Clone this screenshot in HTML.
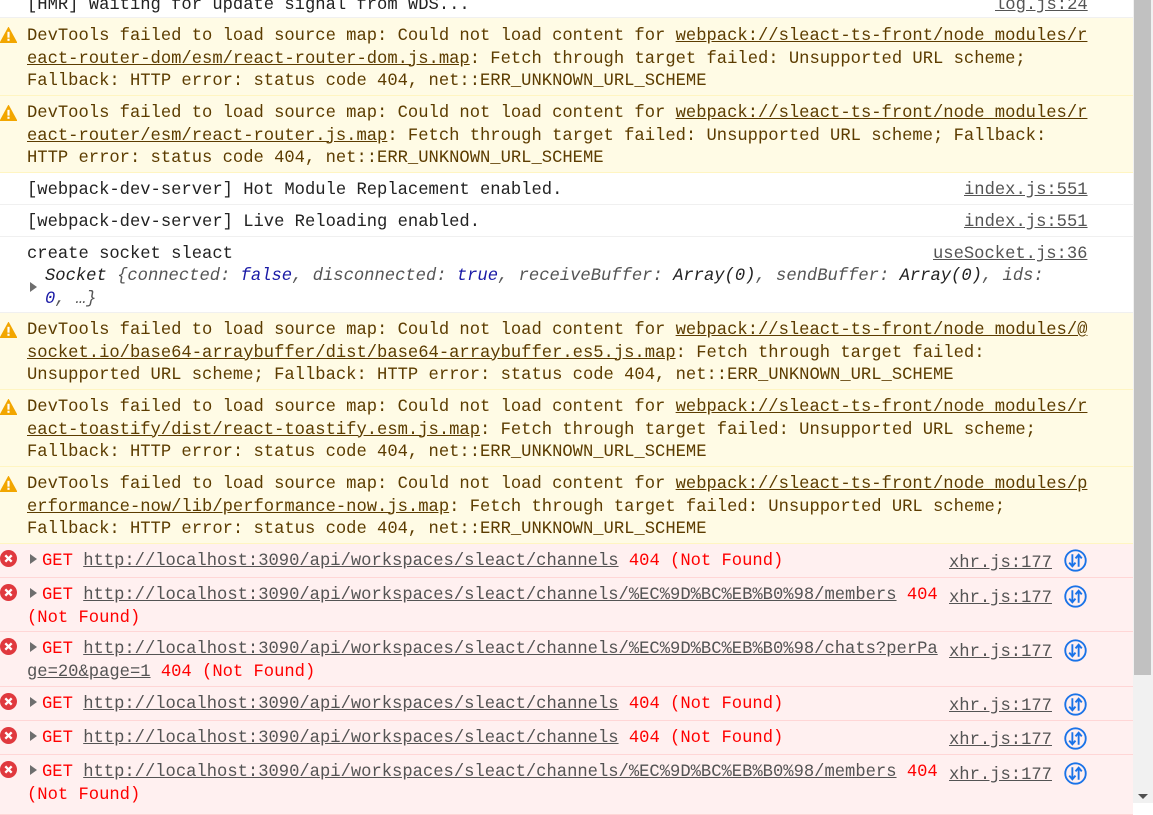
<!DOCTYPE html>
<html><head><meta charset="utf-8"><style>
*{margin:0;padding:0;box-sizing:border-box}
body{width:1153px;height:803px;overflow:hidden;background:#fff;font-family:"Liberation Mono",monospace;font-size:17.17px;position:relative}
.r{position:absolute;left:0;width:1133px;border-bottom:1px solid #f0f0f0}
.w{background:#fffbe5;border-bottom:1px solid #fff5c2;color:#5c3c00}
.e{background:#fff0f0;border-bottom:1px solid #ffd6d6;color:#f00}
.t{position:absolute;left:27px;line-height:22.5px;white-space:pre;margin-top:2px}
.u{text-decoration:underline}
.w .u{color:#5c3c00}
.e .u{color:#545454}
.src{position:absolute;line-height:22.5px;color:#545454;text-decoration:underline;white-space:pre;margin-top:2px}
.tri{display:inline-block;width:0;height:0;border-left:7px solid #6e6e6e;border-top:5px solid transparent;border-bottom:5px solid transparent;margin:0 5px 0 3px;vertical-align:1px}
.ic{position:absolute;left:0}
.xi{position:absolute;left:1064px;width:23px;height:23px}
.gray{color:#555}.bl{color:#1a1aa6}.k{color:#222}
</style></head><body>
<svg width="0" height="0" style="position:absolute"><defs>
<symbol id="wa" viewBox="0 0 16 15"><path d="M8 0.3L15.9 14.7H0.1Z" fill="#f2a600" stroke="#f2a600" stroke-width="0.8" stroke-linejoin="round"/><rect x="7" y="4.5" width="2" height="5.5" fill="#fff"/><rect x="7" y="11" width="2" height="2" fill="#fff"/></symbol>
<symbol id="er" viewBox="0 0 16 16"><circle cx="8" cy="8" r="8" fill="#e0393e"/><path d="M5 5L11 11M11 5L5 11" stroke="#fff" stroke-width="2.2"/></symbol>
<symbol id="xh" viewBox="0 0 22 22"><circle cx="11" cy="11" r="9.8" fill="none" stroke="#1a73e8" stroke-width="1.8"/><path d="M8 5V16M5 13L8 16.5L11 13M14 17V6M11 9L14 5.5L17 9" fill="none" stroke="#1a73e8" stroke-width="1.8"/></symbol>
</defs></svg>

<div class="r" style="top:0;height:18px"><div class="t" style="top:-7px;color:#222">[HMR] Waiting for update signal from WDS...</div><div class="src" style="top:-7px;left:995px">log.js:24</div></div>

<div class="r w" style="top:18px;height:78px"><svg class="ic" style="top:9px" width="17" height="16"><use href="#wa"/></svg><div class="t" style="top:6px">DevTools failed to load source map: Could not load content for <span class="u">webpack://sleact-ts-front/node_modules/r</span>
<span class="u">eact-router-dom/esm/react-router-dom.js.map</span>: Fetch through target failed: Unsupported URL scheme;
Fallback: HTTP error: status code 404, net::ERR_UNKNOWN_URL_SCHEME</div></div>

<div class="r w" style="top:96px;height:77px"><svg class="ic" style="top:9px" width="17" height="16"><use href="#wa"/></svg><div class="t" style="top:5px">DevTools failed to load source map: Could not load content for <span class="u">webpack://sleact-ts-front/node_modules/r</span>
<span class="u">eact-router/esm/react-router.js.map</span>: Fetch through target failed: Unsupported URL scheme; Fallback:
HTTP error: status code 404, net::ERR_UNKNOWN_URL_SCHEME</div></div>

<div class="r" style="top:173px;height:32px"><div class="t" style="top:5px;color:#222">[webpack-dev-server] Hot Module Replacement enabled.</div><div class="src" style="top:5px;left:964px">index.js:551</div></div>
<div class="r" style="top:205px;height:32px"><div class="t" style="top:5px;color:#222">[webpack-dev-server] Live Reloading enabled.</div><div class="src" style="top:5px;left:964px">index.js:551</div></div>

<div class="r" style="top:237px;height:76px"><div class="t" style="top:5px;color:#222">create socket sleact</div><div class="src" style="top:5px;left:933px">useSocket.js:36</div>
<span class="tri" style="position:absolute;left:27px;top:45px"></span>
<div class="t" style="top:27px;left:45px;font-style:italic"><span class="k">Socket</span> <span class="gray">{connected:</span> <span class="bl">false</span><span class="gray">, disconnected:</span> <span class="bl">true</span><span class="gray">, receiveBuffer:</span> <span class="k">Array(0)</span><span class="gray">, sendBuffer:</span> <span class="k">Array(0)</span><span class="gray">, ids:</span>
<span class="bl">0</span><span class="gray">, …}</span></div></div>

<div class="r w" style="top:313px;height:77px"><svg class="ic" style="top:9px" width="17" height="16"><use href="#wa"/></svg><div class="t" style="top:5px">DevTools failed to load source map: Could not load content for <span class="u">webpack://sleact-ts-front/node_modules/@</span>
<span class="u">socket.io/base64-arraybuffer/dist/base64-arraybuffer.es5.js.map</span>: Fetch through target failed:
Unsupported URL scheme; Fallback: HTTP error: status code 404, net::ERR_UNKNOWN_URL_SCHEME</div></div>

<div class="r w" style="top:390px;height:77px"><svg class="ic" style="top:9px" width="17" height="16"><use href="#wa"/></svg><div class="t" style="top:5px">DevTools failed to load source map: Could not load content for <span class="u">webpack://sleact-ts-front/node_modules/r</span>
<span class="u">eact-toastify/dist/react-toastify.esm.js.map</span>: Fetch through target failed: Unsupported URL scheme;
Fallback: HTTP error: status code 404, net::ERR_UNKNOWN_URL_SCHEME</div></div>

<div class="r w" style="top:467px;height:77px"><svg class="ic" style="top:9px" width="17" height="16"><use href="#wa"/></svg><div class="t" style="top:5px">DevTools failed to load source map: Could not load content for <span class="u">webpack://sleact-ts-front/node_modules/p</span>
<span class="u">erformance-now/lib/performance-now.js.map</span>: Fetch through target failed: Unsupported URL scheme;
Fallback: HTTP error: status code 404, net::ERR_UNKNOWN_URL_SCHEME</div></div>

<div class="r e" style="top:544px;height:34px"><svg class="ic" style="top:6px" width="17" height="17"><use href="#er"/></svg><div class="t" style="top:5px"><span class="tri"></span>GET <span class="u">http://localhost:3090/api/workspaces/sleact/channels</span> 404 (Not Found)</div><div class="src" style="top:7px;left:949px">xhr.js:177</div><svg class="xi" style="top:5px"><use href="#xh"/></svg></div>

<div class="r e" style="top:578px;height:54px"><svg class="ic" style="top:6px" width="17" height="17"><use href="#er"/></svg><div class="t" style="top:5px"><span class="tri"></span>GET <span class="u">http://localhost:3090/api/workspaces/sleact/channels/%EC%9D%BC%EB%B0%98/members</span> 404
(Not Found)</div><div class="src" style="top:8px;left:949px">xhr.js:177</div><svg class="xi" style="top:7px"><use href="#xh"/></svg></div>

<div class="r e" style="top:632px;height:55px"><svg class="ic" style="top:6px" width="17" height="17"><use href="#er"/></svg><div class="t" style="top:5px"><span class="tri"></span>GET <span class="u">http://localhost:3090/api/workspaces/sleact/channels/%EC%9D%BC%EB%B0%98/chats?perPa</span>
<span class="u">ge=20&amp;page=1</span> 404 (Not Found)</div><div class="src" style="top:8px;left:949px">xhr.js:177</div><svg class="xi" style="top:7px"><use href="#xh"/></svg></div>

<div class="r e" style="top:687px;height:34px"><svg class="ic" style="top:6px" width="17" height="17"><use href="#er"/></svg><div class="t" style="top:5px"><span class="tri"></span>GET <span class="u">http://localhost:3090/api/workspaces/sleact/channels</span> 404 (Not Found)</div><div class="src" style="top:7px;left:949px">xhr.js:177</div><svg class="xi" style="top:6px"><use href="#xh"/></svg></div>

<div class="r e" style="top:721px;height:34px"><svg class="ic" style="top:6px" width="17" height="17"><use href="#er"/></svg><div class="t" style="top:5px"><span class="tri"></span>GET <span class="u">http://localhost:3090/api/workspaces/sleact/channels</span> 404 (Not Found)</div><div class="src" style="top:7px;left:949px">xhr.js:177</div><svg class="xi" style="top:6px"><use href="#xh"/></svg></div>

<div class="r e" style="top:755px;height:60px"><svg class="ic" style="top:6px" width="17" height="17"><use href="#er"/></svg><div class="t" style="top:5px"><span class="tri"></span>GET <span class="u">http://localhost:3090/api/workspaces/sleact/channels/%EC%9D%BC%EB%B0%98/members</span> 404
(Not Found)</div><div class="src" style="top:8px;left:949px">xhr.js:177</div><svg class="xi" style="top:7px"><use href="#xh"/></svg></div>

<div style="position:absolute;left:1133px;top:0;width:20px;height:803px;background:#f1f1f1"></div>
<div style="position:absolute;left:1134px;top:0;width:17px;height:675px;background:#c1c1c1"></div>
<div style="position:absolute;left:1138px;top:794px;width:0;height:0;border-left:5px solid transparent;border-right:5px solid transparent;border-top:5px solid #505050"></div>
</body></html>
